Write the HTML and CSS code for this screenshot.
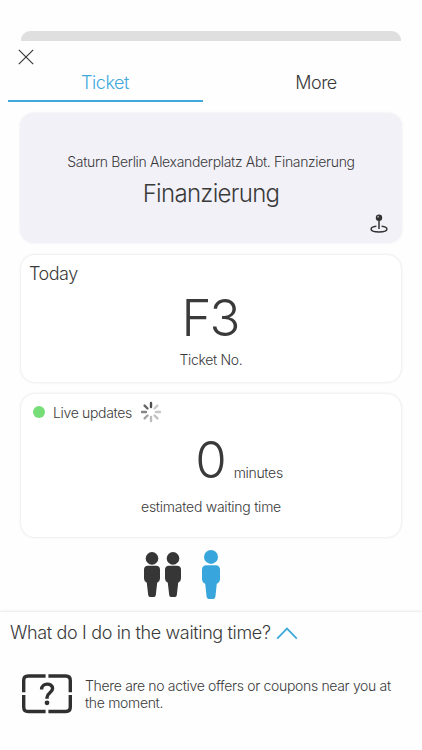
FILE: index.html
```html
<!DOCTYPE html>
<html lang="en">
<head>
	<meta charset="utf-8">
	<meta name="viewport" content="width=device-width, initial-scale=1">
	<title>Ticket</title>
	<link rel="stylesheet" href="styles.css">
</head>
<body>
	<div class="page-behind"></div>

	<div class="header">
		<svg class="close" width="16" height="16" viewBox="0 0 16 16">
			<path d="M0.8 0.8 L15.2 15.2 M15.2 0.8 L0.8 15.2" />
		</svg>
		<div class="tabs">
			<div class="tab active">Ticket</div>
			<div class="tab">More</div>
		</div>
	</div>

	<div class="cards">
		<div class="card location">
			<div class="branch">Saturn Berlin Alexanderplatz Abt. Finanzierung</div>
			<div class="department">Finanzierung</div>
			<!-- map pin -->
			<svg class="pin" width="18" height="20" viewBox="0 0 18 20">
				<path d="M6.4 12.3 C3.2 12.6 1.1 13.6 1.1 15 C1.1 16.8 4.4 18 9 18 C13.6 18 16.9 16.8 16.9 15 C16.9 13.6 14.8 12.6 11.6 12.3" />
				<path d="M9 5 V15" />
				<circle class="pin-head" cx="9" cy="3.7" r="3.2" />
				<circle class="pin-shine" cx="8.1" cy="2.7" r="0.9" />
			</svg>
		</div>

		<div class="card ticket">
			<div class="day">Today</div>
			<div class="number">F3</div>
			<div class="label">Ticket No.</div>
		</div>

		<div class="card waiting">
			<div class="live">
				<span class="dot"></span>
				<span class="live-text">Live updates</span>
				<svg class="spinner" width="22" height="22" viewBox="-11 -11 22 22">
					<path stroke="#4f4f4f" d="M0 -5 V-9" />
					<path stroke="#c9c9c9" d="M3.5 -3.5 L6.4 -6.4" />
					<path stroke="#c6c6c6" d="M5 0 H9" />
					<path stroke="#c2c2c2" d="M3.5 3.5 L6.4 6.4" />
					<path stroke="#bcbcbc" d="M0 5 V9" />
					<path stroke="#a5a5a5" d="M-3.5 3.5 L-6.4 6.4" />
					<path stroke="#858585" d="M-5 0 H-9" />
					<path stroke="#666" d="M-3.5 -3.5 L-6.4 -6.4" />
				</svg>
			</div>
			<div class="time">
				<span class="value">0</span>
				<span class="unit">minutes</span>
			</div>
			<div class="estimate">estimated waiting time</div>
		</div>
	</div>

	<!-- people in the queue, the blue one is you -->
	<div class="queue">
		<svg class="person" width="16" height="46" viewBox="0 0 16 46">
			<circle cx="8" cy="6.4" r="6.3" />
			<path d="M4 13.8 H12 Q16 13.8 16 17.8 V26.5 Q16 29.5 13.2 30.8 L11.8 43 Q11.6 45 10 45 H6 Q4.4 45 4.2 43 L2.8 30.8 Q0 29.5 0 26.5 V17.8 Q0 13.8 4 13.8 Z" />
		</svg>
		<svg class="person" width="16" height="46" viewBox="0 0 16 46">
			<circle cx="8" cy="6.4" r="6.3" />
			<path d="M4 13.8 H12 Q16 13.8 16 17.8 V26.5 Q16 29.5 13.2 30.8 L11.8 43 Q11.6 45 10 45 H6 Q4.4 45 4.2 43 L2.8 30.8 Q0 29.5 0 26.5 V17.8 Q0 13.8 4 13.8 Z" />
		</svg>
		<svg class="person me" width="18" height="51" viewBox="0 0 18 51">
			<circle cx="9" cy="7.9" r="7" />
			<path d="M4.5 16.3 H13.5 Q18 16.3 18 20.8 V30 Q18 33.3 14.8 34.8 L13.4 47.8 Q13.2 49.9 11.4 49.9 H6.6 Q4.8 49.9 4.6 47.8 L3.2 34.8 Q0 33.3 0 30 V20.8 Q0 16.3 4.5 16.3 Z" />
		</svg>
	</div>

	<div class="offers">
		<div class="offers-title">
			<span>What do I do in the waiting time?</span>
			<svg class="chevron" width="22" height="13" viewBox="0 0 22 13">
				<path d="M1.2 11.6 L11 1.6 L20.8 11.6" />
			</svg>
		</div>
		<div class="offers-empty">
			<svg class="coupon" width="50" height="40" viewBox="0 0 50 40">
				<path d="M1.7 18.3 V6.5 Q1.7 2 6.2 2 H23.6 M26.4 2 H43.8 Q48.3 2 48.3 6.5 V18.3 M48.3 21 V33 Q48.3 37.5 43.8 37.5 H26.4 M23.6 37.5 H6.2 Q1.7 37.5 1.7 33 V21" />
				<path class="question" d="M19.6 15.4 C19.6 8.4 30.6 8.6 30.6 14.6 C30.6 18.6 25 19 25 23.4 V24.8" />
				<circle cx="25" cy="28.8" r="2.4" />
			</svg>
			<p class="offers-text">There are no active offers or coupons near you at the moment.</p>
		</div>
	</div>
</body>
</html>
```
FILE: styles.css
```css
html, body {
	margin: 0;
	padding: 0;
	height: 100%;
	overflow: hidden;
}
body {
	display: flex;
	flex-direction: column;
	box-sizing: border-box;
	padding-top: 31px;
	background-color: #fefefe;
	color: #3a3a3a;
	font-family: Inter, "Liberation Sans", sans-serif;
	font-weight: 300;
	font-size: 14px;
	letter-spacing: -0.33px;
}
svg {
	display: block;
	flex: none;
}

.page-behind {
	flex: none;
	height: 10px;
	margin: 0 21px;
	border-radius: 9px 9px 0 0;
	background-color: #dfdfdf;
}

/* header */
.header {
	flex: none;
	height: 72px;
	box-sizing: border-box;
	padding: 8px 8px 0;
}
.close {
	margin-left: 9.5px;
	stroke: #333;
	stroke-width: 1.1;
}
.tabs {
	display: flex;
	gap: 16px;
}
.tab {
	width: 195px;
	height: 35px;
	line-height: 35px;
	text-align: center;
	font-size: 18px;
	letter-spacing: -0.45px;
	text-indent: -1px;
	border-bottom: 2px solid transparent;
}
.tab.active {
	color: #3fa9dc;
	border-bottom-color: #3fa9dc;
}

/* cards */
.cards {
	display: flex;
	flex-direction: column;
	gap: 12px;
	padding: 0 20px;
}
.card {
	box-sizing: border-box;
	border-radius: 14px;
	background-color: #fff;
	box-shadow: 0 0 3px rgba(0, 0, 0, 0.14);
	text-align: center;
}
.location {
	height: 130px;
	padding-top: 39px;
	background-color: #f2f1f8;
	box-shadow: 0 0 3px rgba(0, 0, 0, 0.08);
}
.branch {
	line-height: 20px;
}
.department {
	line-height: 30px;
	margin-top: 7px;
	font-size: 24px;
	letter-spacing: -0.7px;
}
.pin {
	margin: 5px 14px 0 auto;
	fill: none;
	stroke: #333;
	stroke-width: 1.5;
}
.pin-head {
	fill: #333;
	stroke: none;
}
.pin-shine {
	fill: #aaa;
	stroke: none;
}
.ticket {
	height: 127px;
	margin: 0 1px;
	padding: 8px 8px 0;
}
.day {
	line-height: 22px;
	text-align: left;
	font-size: 18px;
	letter-spacing: -0.5px;
}
.number {
	line-height: 60px;
	margin-top: 3px;
	font-size: 51px;
	letter-spacing: -2px;
	text-indent: -2px;
}
.label {
	line-height: 20px;
	margin-top: 2px;
}
.waiting {
	height: 143px;
	margin: 0 1px;
	padding-top: 7px;
}
.live {
	display: flex;
	align-items: center;
	height: 22px;
	padding-left: 12px;
}
.dot {
	width: 12px;
	height: 12px;
	border-radius: 50%;
	background-color: #77dd77;
}
.live-text {
	margin-left: 8px;
	margin-right: 8px;
}
.spinner {
	stroke-width: 2.4;
	stroke-linecap: round;
}
.time {
	display: flex;
	align-items: baseline;
	justify-content: center;
	height: 60px;
	line-height: 60px;
	margin-top: 7px;
	padding-left: 56px;
}
.value {
	font-size: 51px;
	letter-spacing: -1px;
}
.unit {
	margin-left: 8px;
}
.estimate {
	line-height: 20px;
	margin-top: 7px;
	letter-spacing: -0.25px;
}

/* queue */
.queue {
	flex: none;
	display: flex;
	align-items: center;
	height: 75px;
	padding-left: 144px;
}
.person {
	margin-right: 5px;
	fill: #363636;
}
.person.me {
	margin-left: 16px;
	fill: #38a6dc;
}

/* offers */
.offers {
	flex: 1;
	padding: 9px 10px 0;
	box-shadow: 0 0 3px rgba(0, 0, 0, 0.16);
	background-color: #fefefe;
}
.offers-title {
	display: flex;
	align-items: center;
	line-height: 24px;
	font-size: 18px;
	letter-spacing: -0.35px;
}
.chevron {
	margin-left: 5px;
	fill: none;
	stroke: #3fa9dc;
	stroke-width: 1.8;
}
.offers-empty {
	display: flex;
	align-items: center;
	margin-top: 29px;
	padding-left: 12px;
}
.coupon {
	fill: none;
	stroke: #303030;
	stroke-width: 3.4;
}
.coupon .question {
	stroke-width: 3.4;
}
.coupon circle {
	fill: #303030;
	stroke: none;
}
.offers-text {
	width: 320px;
	margin: 0 0 0 13px;
	line-height: 17px;
}
```
